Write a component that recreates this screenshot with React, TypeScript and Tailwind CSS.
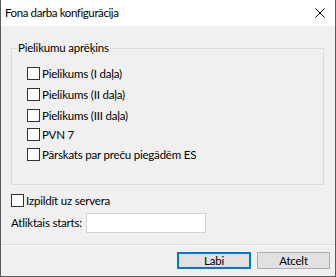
const ITEMS = [
  { label: 'Pielikums (I daļa)', mt: 'mt-[11px]' },
  { label: 'Pielikums (II daļa)', mt: 'mt-[8px]' },
  { label: 'Pielikums (III daļa)', mt: 'mt-[8px]' },
  { label: 'PVN 7', mt: 'mt-[6px]' },
  { label: 'Pārskats par preču piegādēm ES', mt: 'mt-[7px]' },
];

function CheckRow({ label, className = '' }: { label: string; className?: string }) {
  return (
    <label className={`flex items-center h-[13px] gap-[2px] ${className}`}>
      <span className="w-[13px] h-[13px] border border-[#333333] bg-white shrink-0" />
      <span className="leading-[13px] whitespace-nowrap">{label}</span>
    </label>
  );
}

export default function App() {
  return (
    <div
      className="w-[336px] h-[277px] flex flex-col bg-[#f0f0f0] border-x border-b border-[#5a5a5a] text-[11.5px] tracking-[-0.2px] text-black"
      style={{ fontFamily: 'Lato, "Liberation Sans", sans-serif' }}
    >
      <div className="h-[26px] bg-white flex items-center justify-between shrink-0">
        <div className="pl-[4px] text-[11.5px] tracking-[-0.4px] leading-none">Fona darba konfigurācija</div>
        <svg width="10" height="10" viewBox="0 0 10 10" className="mr-[10px]">
          <path d="M0.5 0.5 L9.5 9.5 M9.5 0.5 L0.5 9.5" stroke="#000" strokeWidth="1" />
        </svg>
      </div>

      <fieldset className="ml-[10px] mt-[14px] w-[313px] h-[145px] border border-[#dcdcdc] px-[15px]">
        <legend className="ml-[-10px] px-[1px] leading-[16px]">Pielikumu aprēķins</legend>
        {ITEMS.map((it) => (
          <CheckRow key={it.label} label={it.label} className={it.mt} />
        ))}
      </fieldset>

      <CheckRow label="Izpildīt uz servera" className="ml-[10px] mt-[9px]" />

      <div className="flex items-center ml-[10px] mt-[6px]">
        <span className="w-[75px] shrink-0 whitespace-nowrap">Atliktais starts:</span>
        <input className="w-[120px] h-[20px] bg-white border border-[#d4d4d4] outline-none" />
      </div>

      <div className="mt-[11px] border-t border-[#dfdfdf]">
        <div className="border-t border-white flex justify-end gap-[6px] pt-[6px] pr-[5px]">
          <button className="w-[74px] h-[17px] bg-[#e1e1e1] border-2 border-[#0078d7] leading-none">Labi</button>
          <button className="w-[73px] h-[17px] bg-[#e1e1e1] border border-[#adadad] leading-none">Atcelt</button>
        </div>
      </div>
    </div>
  );
}
